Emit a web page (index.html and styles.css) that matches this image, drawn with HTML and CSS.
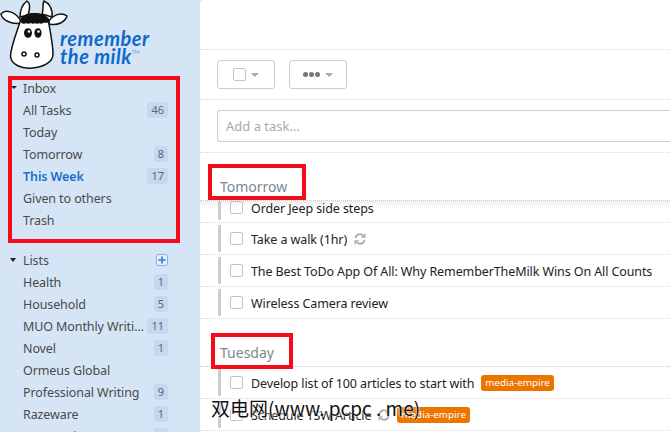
FILE: index.html
```html
<!DOCTYPE html>
<html lang="en">
<head>
<meta charset="utf-8">
<title>Remember The Milk</title>
<link rel="stylesheet" href="styles.css">
</head>
<body>
<div class="app">
  <aside class="sidebar">
    <div class="logo">
      <svg class="cow" width="68" height="70" viewBox="0 0 68 70">
        <path d="M20 17C20 10 23 4 27 1C30 3 30 9 28 15Z" fill="#fff" stroke="#111" stroke-width="1.5"/>
        <path d="M42 14C44 9 42 4 44 1C49 3 53 9 52 17Z" fill="#fff" stroke="#111" stroke-width="1.5"/>
        <path d="M21 21C15 11 5 9 1 14C2 20 12 25 21 23Z" fill="#fff" stroke="#111" stroke-width="1.5"/>
        <path d="M49 21C54 14 62 12 67 16C65 22 58 26 49 24Z" fill="#fff" stroke="#111" stroke-width="1.5"/>
        <path d="M21 19C17 32 11 46 10.500 56C11 65 22 69 32 68C44 67 53 62 53 54C53 44 50 30 48 19C40 12 28 12 21 19Z" fill="#fff" stroke="#111" stroke-width="1.500"/>
        <path d="M20 21C22 15 29 13 35 13C41 13 47 15 50 21C47 24 45 22 43 23C41 25 39 22 37 24C35 22 33 25 31 23C28 25 26 22 24 24C22 23 21 23 20 21Z" fill="#111"/>
        <ellipse cx="28" cy="33" rx="4" ry="4.800" fill="#111"/>
        <ellipse cx="38" cy="33" rx="3.600" ry="4.800" fill="#111"/>
        <circle cx="29" cy="31.500" r="1.300" fill="#fff"/>
        <circle cx="38.500" cy="31.500" r="1.300" fill="#fff"/>
        <circle cx="24" cy="54" r="2" fill="#fff" stroke="#111" stroke-width="1.500"/>
        <circle cx="37" cy="55" r="2" fill="#fff" stroke="#111" stroke-width="1.500"/>
      </svg>
      <div class="wordmark"><div>remember</div><div>the milk<sup class="tm">TM</sup></div></div>
    </div>

    <nav class="group group-smart">
      <div class="row head"><span class="caret caret-small"></span><span class="name">Inbox</span></div>
      <div class="row"><span class="name">All Tasks</span><span class="count">46</span></div>
      <div class="row"><span class="name">Today</span></div>
      <div class="row"><span class="name">Tomorrow</span><span class="count">8</span></div>
      <div class="row active"><span class="name">This Week</span><span class="count">17</span></div>
      <div class="row"><span class="name">Given to others</span></div>
      <div class="row"><span class="name">Trash</span></div>
    </nav>

    <nav class="group group-lists">
      <div class="row head"><span class="caret"></span><span class="name">Lists</span>
        <svg class="add" width="12" height="12" viewBox="0 0 12 12"><rect x=".5" y=".5" width="11" height="11" rx="2" fill="#e6f0fa" stroke="#7fb2e8"/><path d="M6 2.500v7M2.500 6h7" stroke="#4a90dc" stroke-width="2"/></svg>
      </div>
      <div class="row"><span class="name">Health</span><span class="count">1</span></div>
      <div class="row"><span class="name">Household</span><span class="count">5</span></div>
      <div class="row"><span class="name">MUO Monthly Writi...</span><span class="count">11</span></div>
      <div class="row"><span class="name">Novel</span><span class="count">1</span></div>
      <div class="row"><span class="name">Ormeus Global</span></div>
      <div class="row"><span class="name">Professional Writing</span><span class="count">9</span></div>
      <div class="row"><span class="name">Razeware</span><span class="count">1</span></div>
      <div class="row"><span class="name">Reconnaissance</span><span class="count">1</span></div>
    </nav>
  </aside>

  <main class="main">
    <div class="topbar"></div>
    <div class="toolbar">
      <button class="btn"><span class="box"></span><span class="arrow"></span></button>
      <button class="btn"><span class="dots"><i></i><i></i><i></i></span><span class="arrow"></span></button>
    </div>
    <div class="addbar"><div class="addinput">Add a task...</div></div>

    <h2 class="day">Tomorrow</h2>
    <div class="tasks">
      <div class="shadow"></div>
      <div class="task task-clipped"><span class="check"></span><span class="title">Order Jeep side steps</span></div>
      <div class="task"><span class="check"></span><span class="title">Take a walk (1hr)</span>
        <svg class="repeat" width="12" height="12" viewBox="0 0 12 12" fill="none" stroke="#aaa" stroke-width="1.800"><path d="M1.500 5A4.500 4.500 0 0 1 9.500 3"/><path d="M10.500 7A4.500 4.500 0 0 1 2.500 9"/><path d="M11 .5V4H7.500" stroke-width="1.300"/><path d="M1 11.500V8h3.500" stroke-width="1.300"/></svg>
      </div>
      <div class="task"><span class="check"></span><span class="title">The Best ToDo App Of All: Why RememberTheMilk Wins On All Counts</span></div>
      <div class="task"><span class="check"></span><span class="title">Wireless Camera review</span></div>
    </div>

    <h2 class="day">Tuesday</h2>
    <div class="tasks">
      <div class="task"><span class="check"></span><span class="title">Develop list of 100 articles to start with</span><span class="tag">media-empire</span></div>
      <div class="task"><span class="check"></span><span class="title">Schedule TSW Article</span>
        <svg class="repeat" width="12" height="12" viewBox="0 0 12 12" fill="none" stroke="#aaa" stroke-width="1.800"><path d="M1.500 5A4.500 4.500 0 0 1 9.500 3"/><path d="M10.500 7A4.500 4.500 0 0 1 2.500 9"/><path d="M11 .5V4H7.500" stroke-width="1.300"/><path d="M1 11.500V8h3.500" stroke-width="1.300"/></svg>
        <span class="tag">media-empire</span></div>
    </div>
  </main>

  <div class="mark mark-list"></div>
  <div class="mark mark-tomorrow"></div>
  <div class="mark mark-tuesday"></div>
  <div class="watermark">双电网(www. pcpc . me)</div>
</div>
</body>
</html>
```

FILE: styles.css
```css
* { box-sizing: border-box; }
html, body { margin: 0; height: 100%; overflow: hidden; }
body { font-family: "Noto Sans", "Open Sans", sans-serif; font-size: 12.5px; letter-spacing: -.1px; color: #333; background: #fff; }
.app { position: relative; display: flex; width: 670px; height: 432px; overflow: hidden; background: #d5e5f5; }

/* sidebar */
.sidebar { width: 200px; flex: none; overflow: hidden; }
.logo { position: relative; height: 77px; }
.cow { display: block; }
.wordmark { position: absolute; left: 60px; top: 29px; color: #0f69c9; font-family: "Lato", sans-serif; font-weight: 700; font-style: italic; font-size: 20px; line-height: 18px; letter-spacing: .5px; }
.tm { font-size: 5px; font-weight: 400; font-style: normal; vertical-align: 10px; line-height: 0; color: #6b9bd0; letter-spacing: 0; }

.group { display: flex; flex-direction: column; }
.group-lists { margin-top: 18px; }
.row { position: relative; display: flex; align-items: center; justify-content: space-between; height: 22px; padding: 0 32px 0 23px; color: #4a4a4a; white-space: nowrap; }
.row.head { justify-content: flex-start; }
.row.active { color: #1a6fc9; font-weight: 600; }
.caret { position: absolute; left: 10px; top: 9px; width: 0; height: 0; border: 3.500px solid transparent; border-top: 4px solid #222; border-bottom: 0; }
.caret-small { left: 11px; top: 9px; border-width: 3px 3px 0; }
.count { min-width: 14px; height: 16px; padding: 0 4px; border-radius: 3px; background: #c4d9f0; color: #5c6670; font-size: 11px; font-weight: 400; letter-spacing: 0; line-height: 16px; text-align: center; }
.add { margin-left: auto; }

/* main */
.main { flex: 1; min-width: 0; background: #fff; border-top-left-radius: 4px; overflow: hidden; }
.topbar { height: 50px; border-bottom: 1px dotted #d8d8d8; }
.toolbar { display: flex; gap: 14px; height: 50px; padding: 10px 0 0 17px; border-bottom: 1px dotted #d8d8d8; }
.btn { display: flex; align-items: center; justify-content: center; gap: 5px; width: 58px; height: 29px; padding: 0; background: #fff; border: 1px solid #ccc; border-radius: 3px; }
.box { width: 13px; height: 13px; border: 1px solid #c4c4c4; border-radius: 2px; }
.arrow { width: 0; height: 0; border: 4px solid transparent; border-top: 4px solid #aaa; border-bottom: 0; }
.dots { display: flex; gap: 1px; }
.dots i { width: 5px; height: 5px; border-radius: 50%; background: #777; }
.addbar { height: 53px; padding: 10px 0 0 17px; border-bottom: 1px dotted #d8d8d8; }
.addinput { height: 32px; padding-left: 8px; border: 1px solid #ccc; border-right: 0; border-radius: 3px 0 0 3px; color: #aaa; font-size: 13px; line-height: 30px; letter-spacing: 0; }
.day { height: 48px; margin: 0; padding: 23px 0 0 20px; color: #7b8794; font-size: 14px; font-weight: 400; letter-spacing: 0; line-height: 22px; border-bottom: 1px dotted #c8c8c8; }
.tasks { position: relative; }
.shadow { position: absolute; left: 0; right: 0; top: 0; height: 6px; background: linear-gradient(#eee, #fff0); }
.task { position: relative; display: flex; align-items: center; height: 32px; padding-left: 30px; color: #222; white-space: nowrap; border-bottom: 1px dotted #d8d8d8; }
.task::before { content: ""; position: absolute; left: 18px; top: 2px; bottom: 2px; width: 3px; background: #ccc; }
.task-clipped { height: 22px; padding-bottom: 8px; }
.task-clipped::before { top: 0; }
.check { flex: none; width: 13px; height: 13px; margin-right: 8px; border: 1px solid #c4c4c4; border-radius: 2px; }
.title { margin-top: 2px; }
.repeat { margin-left: 7px; }
.tag { margin-left: 7px; padding: 0 4px; height: 16px; border-radius: 3px; background: #ec7500; color: #fff; font-size: 9.800px; letter-spacing: 0; line-height: 16px; }

/* annotations over the screenshot */
.mark { position: absolute; border: 4px solid #f40c1c; }
.mark-list { left: 8px; top: 76px; width: 172px; height: 167px; }
.mark-tomorrow { left: 208px; top: 164px; width: 98px; height: 36px; }
.mark-tuesday { left: 211px; top: 333px; width: 82px; height: 36px; }
.watermark { position: absolute; left: 211px; top: 394px; color: #111; font-family: "Noto Sans CJK SC", "Noto Sans", sans-serif; font-size: 19px; line-height: 28px; letter-spacing: 0; white-space: nowrap; text-shadow: 0 0 2px #fff, 0 0 2px #fff; }
```
